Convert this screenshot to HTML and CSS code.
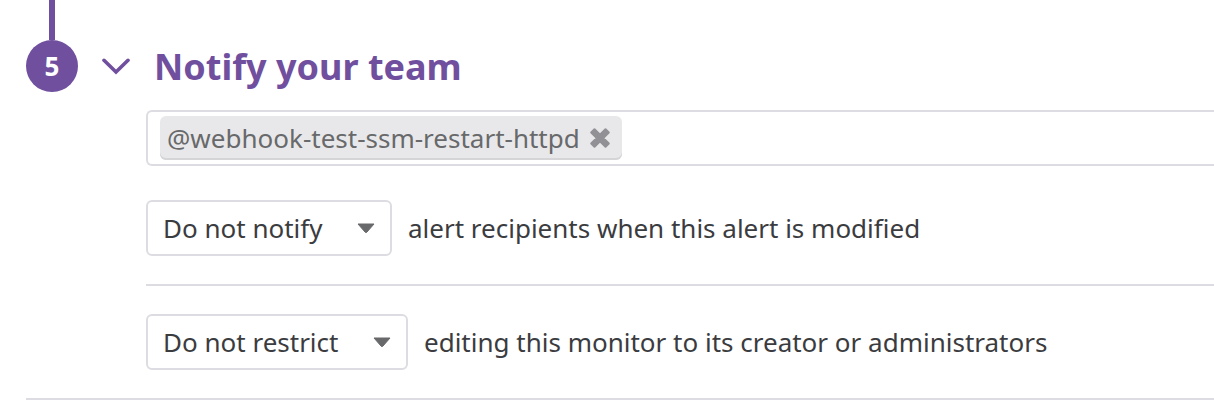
FILE: index.html
```html
<!DOCTYPE html>
<html lang="en">
<head>
<meta charset="utf-8">
<title>Notify your team</title>
<link rel="stylesheet" href="styles.css">
</head>
<body>
<main class="step">
  <div class="rail"><span class="line"></span><span class="badge">5</span></div>
  <div class="content">
    <h2 class="heading">
      <button class="toggle" type="button" aria-label="Collapse section" aria-expanded="true">
        <svg width="28" height="18" viewBox="0 0 28 18"><path d="M2 2.300L14 14L26 2.300" fill="none" stroke="currentColor" stroke-width="3.600" stroke-linecap="round" stroke-linejoin="miter"/></svg>
      </button>
      <span>Notify your team</span>
    </h2>
    <div class="fields">
      <div class="recipients">
        <span class="tag">@webhook-test-ssm-restart-httpd
          <button class="remove" type="button" aria-label="Remove recipient">
            <svg width="22" height="22" viewBox="0 0 22 22"><path d="M4.500 4.500L17.500 17.500M17.500 4.500L4.500 17.500" fill="none" stroke="currentColor" stroke-width="6"/><path d="M5.500 2.200L2.200 5.500L16.500 19.800L19.800 16.500ZM16.500 2.200L19.800 5.500L5.500 19.800L2.200 16.500Z" fill="currentColor" stroke="currentColor" stroke-width="2" stroke-linejoin="round"/></svg>
          </button>
        </span>
      </div>
      <div class="option">
        <span class="picker picker-notify">
          <select id="notify"><option>Do not notify</option><option>Notify</option></select>
          <svg class="caret" width="20" height="12" viewBox="0 0 20 12"><path d="M2 2H18L11 10Q10 11 9 10Z" fill="currentColor" stroke="currentColor" stroke-linejoin="round"/></svg>
        </span>
        <label for="notify">alert recipients when this alert is modified</label>
      </div>
      <div class="option">
        <span class="picker picker-restrict">
          <select id="restrict"><option>Do not restrict</option><option>Restrict</option></select>
          <svg class="caret" width="20" height="12" viewBox="0 0 20 12"><path d="M2 2H18L11 10Q10 11 9 10Z" fill="currentColor" stroke="currentColor" stroke-linejoin="round"/></svg>
        </span>
        <label for="restrict">editing this monitor to its creator or administrators</label>
      </div>
    </div>
  </div>
</main>
</body>
</html>
```
FILE: styles.css
```css
* { box-sizing: border-box; }
body {
  margin: 0;
  background: #fff;
  color: #3b3c40;
  font-family: "Noto Sans", sans-serif;
  font-size: 26px;
  line-height: 36px;
  overflow-x: hidden;
}
.step {
  display: flex;
  gap: 24px;
  margin-left: 26px;
  border-bottom: 2px solid #dddce2;
}
.rail {
  display: flex;
  flex: none;
  flex-direction: column;
  align-items: center;
  width: 52px;
}
.line { width: 6px; height: 40px; background: #704f9e; }
.badge {
  width: 52px;
  height: 52px;
  border-radius: 50%;
  background: #704f9e;
  color: #fff;
  font-size: 26px;
  font-weight: 700;
  line-height: 52px;
  text-align: center;
}
.content { flex: 1; min-width: 0; padding-top: 40px; }
.heading {
  display: flex;
  align-items: center;
  gap: 24px;
  margin: 0 0 16px;
  color: #704f9e;
  font-size: 36px;
  font-weight: 700;
  line-height: 54px;
}
.toggle, .remove {
  display: flex;
  padding: 0;
  border: 0;
  background: none;
  color: inherit;
}
.fields { padding-left: 44px; }
.recipients {
  display: flex;
  padding: 4px 12px;
  border: 2px solid #dddce2;
  border-right: 0;
  border-radius: 6px 0 0 6px;
}
.tag {
  display: flex;
  align-items: center;
  gap: 9px;
  height: 44px;
  padding: 0 11px 0 7px;
  border-radius: 6px;
  background: #e8e8ea;
  box-shadow: inset 0 -2px #d5d5d8;
  color: #68696b;
}
.remove { color: #929195; }
.option {
  display: flex;
  align-items: center;
  gap: 16px;
  padding: 28px 0;
}
.option + .option { border-top: 2px solid #dddce2; }
.recipients + .option { padding-top: 34px; }
.picker { display: grid; align-items: center; }
.picker-notify { width: 246px; }
.picker-restrict { width: 262px; }
.picker select {
  grid-area: 1 / 1;
  width: 100%;
  height: 56px;
  padding: 0 48px 0 15px;
  border: 2px solid #dddce2;
  border-radius: 6px;
  appearance: none;
  background: #fff;
  color: inherit;
  font: inherit;
}
.caret {
  grid-area: 1 / 1;
  justify-self: end;
  margin-right: 16px;
  color: #68696b;
  pointer-events: none;
}
```
